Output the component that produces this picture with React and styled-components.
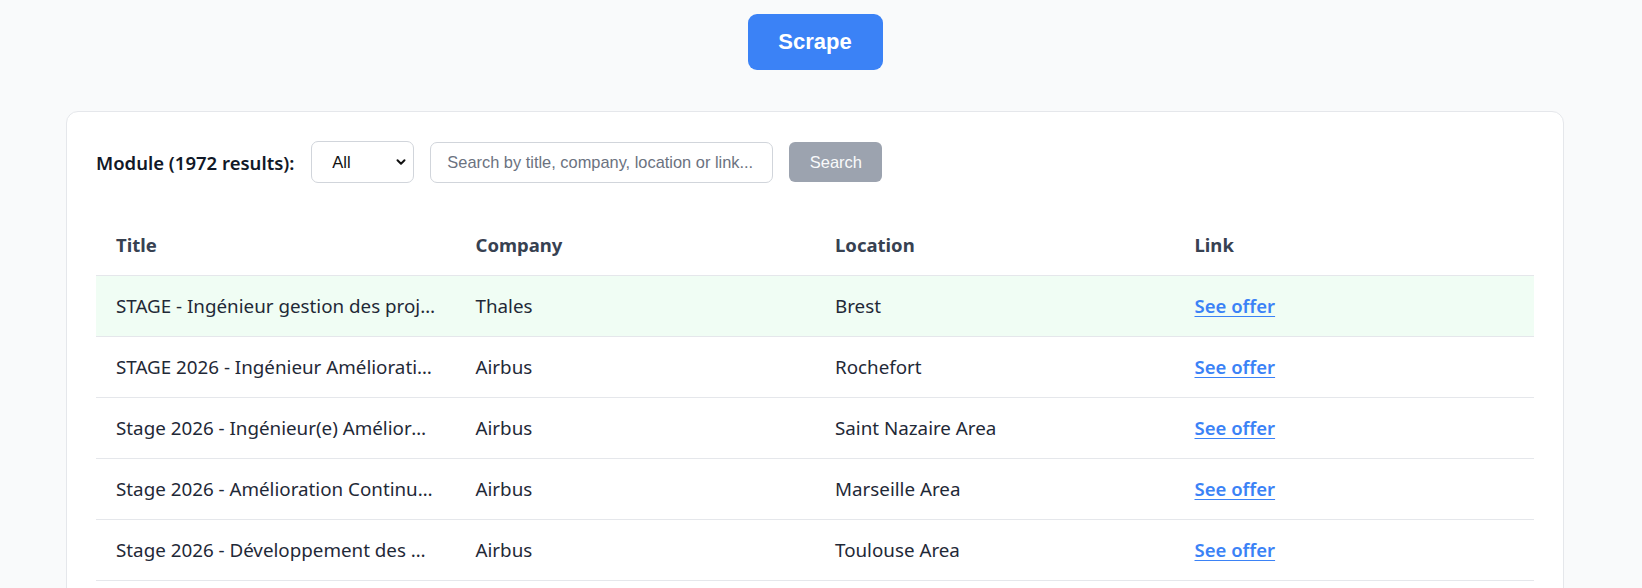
import React from 'react';
import styled, { createGlobalStyle } from 'styled-components';
import { ChevronDown } from 'lucide-react';

const GlobalStyle = createGlobalStyle`
  body {
    margin: 0;
    background: #f9fafb;
    font-family: "Noto Sans", "Open Sans", sans-serif;
    color: #1f2937;
  }
`;

const Page = styled.div`
  width: 1630px;
  box-sizing: border-box;
  padding: 14px 66px 40px;
  display: flex;
  flex-direction: column;
  align-items: center;
  gap: 41px;
`;

const ScrapeButton = styled.button`
  width: 135px;
  height: 56px;
  border: none;
  border-radius: 9px;
  background: #3b82f6;
  color: #fff;
  font-family: "Liberation Sans", Arial, sans-serif;
  font-size: 22px;
  font-weight: 700;
  cursor: pointer;
`;

const Card = styled.div`
  align-self: stretch;
  background: #fff;
  border: 1px solid #e5e7eb;
  border-radius: 12px;
  padding: 29px 29px 0;
`;

const Toolbar = styled.div`
  display: flex;
  align-items: center;
  gap: 16px;
  height: 42px;
  margin-bottom: 30px;
`;

const Label = styled.label`
  font-size: 18.5px;
  font-weight: 600;
  color: #111827;
  margin-right: 1px;
`;

const SelectWrap = styled.div`
  position: relative;
  width: 103px;
  height: 42px;

  svg {
    position: absolute;
    right: 6px;
    top: 14px;
    pointer-events: none;
    color: #111;
  }
`;

const Select = styled.select`
  appearance: none;
  width: 100%;
  height: 100%;
  border: 1px solid #d1d5db;
  border-radius: 7px;
  background: #fff;
  padding: 0 0 0 20px;
  font-family: "Liberation Sans", Arial, sans-serif;
  font-size: 16.5px;
  color: #111;
`;

const SearchInput = styled.input`
  width: 343px;
  height: 41px;
  box-sizing: border-box;
  border: 1px solid #d1d5db;
  border-radius: 7px;
  padding: 0 16px;
  font-family: "Liberation Sans", Arial, sans-serif;
  font-size: 16.4px;
  color: #111;

  &::placeholder {
    color: #6b7280;
  }
`;

const SearchButton = styled.button`
  width: 93px;
  height: 40px;
  border: none;
  border-radius: 6px;
  background: #9ca3af;
  color: #f9fafb;
  font-family: "Liberation Sans", Arial, sans-serif;
  font-size: 16.5px;
`;

const Table = styled.table`
  width: 100%;
  table-layout: fixed;
  border-collapse: collapse;
`;

const Th = styled.th`
  height: 62px;
  padding: 2px 20px 0;
  box-sizing: border-box;
  text-align: left;
  font-size: 18.5px;
  font-weight: 700;
  color: #374151;
  border-bottom: 1px solid #e5e7eb;
`;

const Row = styled.tr`
  background: ${(p) => (p.$active ? '#f0fdf4' : '#fff')};
  border-bottom: 1px solid #e5e7eb;
`;

const Td = styled.td`
  height: 60px;
  padding: 0 20px;
  font-size: 18.8px;
  color: #1f2937;
  white-space: nowrap;
  overflow: hidden;
  text-overflow: ellipsis;
`;

const OfferLink = styled.a`
  color: #3b82f6;
  font-weight: 600;
  font-size: 18.5px;
  text-decoration: underline;
  text-underline-offset: 3px;
`;

const offers = [
  { title: 'STAGE - Ingénieur gestion des projets industriels', company: 'Thales', location: 'Brest' },
  { title: 'STAGE 2026 - Ingénieur Amélioration Continue', company: 'Airbus', location: 'Rochefort' },
  { title: 'Stage 2026 - Ingénieur(e) Amélioration Continue', company: 'Airbus', location: 'Saint Nazaire Area' },
  { title: 'Stage 2026 - Amélioration Continue Production', company: 'Airbus', location: 'Marseille Area' },
  { title: 'Stage 2026 - Développement des outils digitaux', company: 'Airbus', location: 'Toulouse Area' },
  { title: 'Stage 2026 - Ingénieur Qualité Fournisseurs', company: 'Airbus', location: 'Nantes Area' },
  { title: 'STAGE - Ingénieur Systèmes Embarqués', company: 'Thales', location: 'Vélizy' },
];

export default function App() {
  return (
    <>
      <GlobalStyle />
      <Page>
        <ScrapeButton>Scrape</ScrapeButton>
        <Card>
          <Toolbar>
            <Label>Module (1972 results):</Label>
            <SelectWrap>
              <Select defaultValue="all">
                <option value="all">All</option>
              </Select>
              <ChevronDown size={14} strokeWidth={3.4} />
            </SelectWrap>
            <SearchInput placeholder="Search by title, company, location or link..." />
            <SearchButton>Search</SearchButton>
          </Toolbar>
          <Table>
            <thead>
              <tr>
                <Th>Title</Th>
                <Th>Company</Th>
                <Th>Location</Th>
                <Th>Link</Th>
              </tr>
            </thead>
            <tbody>
              {offers.map((o, i) => (
                <Row key={i} $active={i === 0}>
                  <Td>{o.title}</Td>
                  <Td>{o.company}</Td>
                  <Td>{o.location}</Td>
                  <Td>
                    <OfferLink href="#">See offer</OfferLink>
                  </Td>
                </Row>
              ))}
            </tbody>
          </Table>
        </Card>
      </Page>
    </>
  );
}
